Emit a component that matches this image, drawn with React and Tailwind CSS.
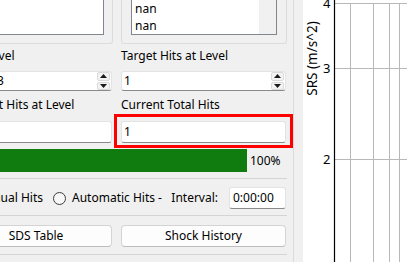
import React from "react";

const font = "font-['Noto_Sans','Open_Sans',sans-serif]";

function SpinArrows() {
  return (
    <div className="flex w-[14px] flex-col gap-px pr-px">
      <div className="flex h-[9px] items-center justify-center rounded-[2px] border border-[#dadada] bg-[#f3f3f3]">
        <svg width="7" height="4" viewBox="0 0 7 4">
          <polygon points="3.5,0 7,4 0,4" fill="#1a1a1a" />
        </svg>
      </div>
      <div className="flex h-[9px] items-center justify-center rounded-[2px] border border-[#dadada] bg-[#f3f3f3]">
        <svg width="7" height="4" viewBox="0 0 7 4">
          <polygon points="0,0 7,0 3.5,4" fill="#1a1a1a" />
        </svg>
      </div>
    </div>
  );
}

function SpinBox({ value, className = "" }) {
  return (
    <div
      className={`flex h-[20px] items-stretch rounded-[3px] border border-[#e3e3e3] border-b-[#8a8a8a] bg-white ${className}`}
    >
      <div className="flex-1 whitespace-nowrap pl-[2px] leading-[18px]">{value}</div>
      <SpinArrows />
    </div>
  );
}

function LineEdit({ value, className = "" }) {
  return (
    <div
      className={`h-[22px] shrink-0 whitespace-nowrap rounded-[3px] border border-[#e3e3e3] border-b-[#8a8a8a] bg-white pl-[2px] leading-[20px] ${className}`}
    >
      {value}
    </div>
  );
}

function ListBox({ items, scroll, className = "" }) {
  return (
    <div
      className={`flex flex-1 border-x border-b border-[#80868e] bg-white ${className}`}
    >
      <div className="flex flex-1 flex-col justify-end overflow-hidden">
        {items.map((t, i) => (
          <div key={i} className="h-[17px] shrink-0 pl-[3px] leading-[17px]">
            {t}
          </div>
        ))}
      </div>
      {scroll && <div className="w-[17px] bg-[#f0f0f0]" />}
    </div>
  );
}

function Radio() {
  return (
    <span className="inline-block h-[13px] w-[13px] shrink-0 rounded-full border border-[#3c3c3c] bg-[#f7f7f7]" />
  );
}

function Button({ children }) {
  return (
    <div className="flex h-[22px] items-center justify-center rounded-[4px] border border-[#d4d4d4] border-b-[#bdbdbd] bg-[#fdfdfd]">
      {children}
    </div>
  );
}

function Plot() {
  const vx = [47.5, 70.5, 86.5, 96.5];
  const hy = [3.5, 68.5, 159.5];
  const labels = [
    ["4", 8.3],
    ["3", 72.7],
    ["2", 164],
  ];
  return (
    <svg width="104" height="262" className="block shrink-0 bg-white">
      {vx.map((x) => (
        <line key={x} x1={x} y1="3" x2={x} y2="262" stroke="#b8b8b8" strokeWidth="1" />
      ))}
      {hy.map((y) => (
        <line key={y} x1="31" y1={y} x2="104" y2={y} stroke="#b8b8b8" strokeWidth="1" />
      ))}
      <line x1="31.5" y1="0" x2="31.5" y2="262" stroke="#000" strokeWidth="1.2" />
      {labels.map(([t, y]) => (
        <text
          key={t}
          x="27.5"
          y={y}
          textAnchor="end"
          fontSize="13"
          fontFamily="Noto Sans, sans-serif"
          fill="#000"
        >
          {t}
        </text>
      ))}
      <text
        transform="translate(13.5 58.5) rotate(-90)"
        textAnchor="middle"
        fontSize="13.5"
        fontFamily="Noto Sans, sans-serif"
        fill="#000"
      >
        SRS (m/s^2)
      </text>
    </svg>
  );
}

export default function App() {
  return (
    <div
      className={`flex h-[262px] w-[407px] overflow-hidden bg-[#f0f0f0] text-[12px] text-black ${font}`}
    >
      <div className="w-[294px] shrink-0 border-r border-[#dadada]">
        <div className="ml-[-40px] flex w-[327px] flex-col">
          {/* list groups */}
          <div className="grid h-[41px] grid-cols-[153px_166px] gap-x-[8px]">
            <div className="flex flex-col rounded-b-[3px] border-x border-b border-[#dcdcdc] pb-[8px] pl-[9px] pr-[8px]">
              <ListBox items={[]} />
            </div>
            <div className="flex flex-col rounded-b-[3px] border-x border-b border-[#dcdcdc] px-[9px] pb-[8px]">
              <ListBox items={["nan", "nan"]} scroll />
            </div>
          </div>

          <div className="mt-[7px] grid grid-cols-[153px_166px] gap-x-[8px] whitespace-nowrap leading-[16px]">
            <div>Test Level</div>
            <div>Target Hits at Level</div>
          </div>

          <div className="mt-[7px] grid grid-cols-[153px_166px] gap-x-[8px]">
            <SpinBox value={<span className="pl-[2px]">Level 3</span>} className="mr-[1px]" />
            <SpinBox value="1" className="mr-[1px]" />
          </div>

          <div className="mt-[6px] grid grid-cols-[153px_166px] gap-x-[8px] whitespace-nowrap leading-[16px]">
            <div>Current Hits at Level</div>
            <div>Current Total Hits</div>
          </div>

          <div className="mt-[8px] grid grid-cols-[153px_166px] gap-x-[8px]">
            <LineEdit value="1" className="mr-[1px]" />
            <div className="relative mr-[1px]">
              <LineEdit value="1" />
              <div className="pointer-events-none absolute -bottom-[5px] -left-[7px] -right-[7px] -top-[7px] border-[3px] border-[#ff0000]" />
            </div>
          </div>

          <div className="mt-[6px] flex h-[23px] items-center">
            <div className="h-full w-[287px] bg-[#107c10]" />
            <div className="ml-[3px]">100%</div>
          </div>

          <div className="mt-[6px] h-px bg-[#d4d4d4]" />

          <div className="mt-[8px] flex h-[22px] items-center whitespace-nowrap pr-[1px]">
            <div className="flex w-[93px] shrink-0 items-center justify-end gap-[5px] pr-[10px]">
              <Radio />
              <span className="shrink-0">Manual Hits</span>
            </div>
            <Radio />
            <span className="ml-[6px]">Automatic Hits -</span>
            <span className="ml-auto">Interval:</span>
            <LineEdit value="0:00:00" className="ml-[11px] w-[57px] pl-[3px]" />
          </div>

          <div className="mt-[6px] h-px bg-[#d4d4d4]" />

          <div className="mt-[9px] grid grid-cols-[153px_166px] gap-x-[8px]">
            <div className="mr-[1px]">
              <Button>SDS Table</Button>
            </div>
            <div className="mr-[1px]">
              <Button>Shock History</Button>
            </div>
          </div>

          <div className="mt-[7px] h-px bg-[#d4d4d4]" />
        </div>
      </div>
      <div className="w-[9px] shrink-0" />
      <Plot />
    </div>
  );
}
